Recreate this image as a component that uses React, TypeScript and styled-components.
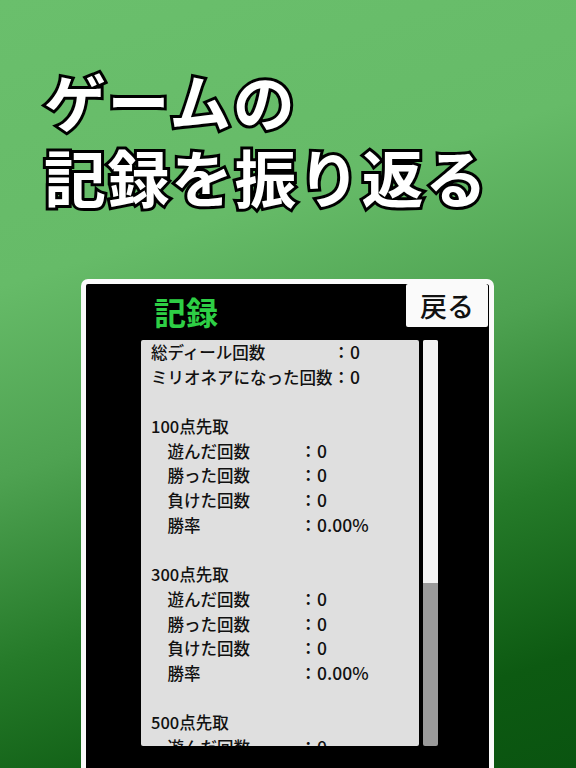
import styled, { createGlobalStyle } from "styled-components";

const GlobalStyle = createGlobalStyle`
  html, body {
    margin: 0;
    padding: 0;
  }
  body {
    width: 576px;
    height: 768px;
    overflow: hidden;
    font-family: "Noto Sans CJK JP", "Noto Sans", sans-serif;
  }
`;

const Page = styled.div`
  width: 576px;
  height: 768px;
  overflow: hidden;
  display: flex;
  flex-direction: column;
  background: linear-gradient(
    162deg,
    #6abf6c 0%,
    #66bb68 30%,
    #4ea251 50%,
    #257a29 70%,
    #0d5a12 88%,
    #0a5410 100%
  );
`;

const Headline = styled.h1`
  margin: 62px 0 0 44px;
  font-size: 62px;
  line-height: 76px;
  font-weight: 700;
  color: #fff;
  -webkit-text-stroke: 6px #000;
  paint-order: stroke fill;
  letter-spacing: 1.5px;
`;

const Frame = styled.div`
  margin: 65px 0 0 81px;
  width: 403px;
  flex: 1;
  background: #000;
  border: 5px solid #fafafa;
  border-bottom: none;
  border-radius: 7px 7px 0 0;
  display: flex;
  flex-direction: column;
`;

const Header = styled.div`
  height: 56px;
  display: flex;
  align-items: flex-start;
  justify-content: space-between;
`;

const Title = styled.div`
  margin: 9px 0 0 68px;
  font-size: 32px;
  line-height: 36px;
  font-weight: 700;
  color: #2ecf45;
`;

const BackButton = styled.button`
  margin: 0 1px 0 0;
  width: 82px;
  height: 43px;
  border: none;
  border-radius: 2px;
  background: #fafafa;
  color: #111;
  font-family: inherit;
  font-size: 27px;
  font-weight: 500;
  line-height: 1;
  padding: 0;
  cursor: pointer;
`;

const Body = styled.div`
  display: flex;
  gap: 4px;
  margin-left: 55px;
  height: 406px;
`;

const Panel = styled.div`
  width: 278px;
  height: 100%;
  overflow: hidden;
  background: #dfdfdf;
  border-radius: 2px;
  padding-left: 10px;
  box-sizing: border-box;
  color: #111;
  font-size: 16.5px;
  font-weight: 500;
  line-height: 24.7px;
`;

const Track = styled.div`
  width: 15px;
  height: 100%;
  border-radius: 2px;
  overflow: hidden;
  display: flex;
  flex-direction: column;
  background: #9a9a9a;
`;

const Thumb = styled.div<{ $size: number }>`
  height: ${(p) => p.$size}px;
  background: #f4f4f4;
`;

const Row = styled.div<{ $indent?: boolean }>`
  display: flex;
  white-space: pre;
  height: 24.7px;
  padding-left: ${(p) => (p.$indent ? "1em" : "0")};
`;

const Label = styled.span<{ $cols: number }>`
  width: ${(p) => p.$cols}em;
  flex-shrink: 0;
`;

const Value = styled.span`
  font-size: 17.5px;
`;

const Heading = styled.div`
  height: 24.7px;
`;

const Blank = styled.div`
  height: 24.7px;
`;

type Stat = { label: string; value: string };

const sections: { title: string; stats: Stat[] }[] = [100, 300, 500].map((pt) => ({
  title: `${pt}点先取`,
  stats: [
    { label: "遊んだ回数", value: "0" },
    { label: "勝った回数", value: "0" },
    { label: "負けた回数", value: "0" },
    { label: "勝率", value: "0.00%" },
  ],
}));

export default function App() {
  return (
    <Page>
      <GlobalStyle />
      <Headline>
        ゲームの
        <br />
        記録を振り返る
      </Headline>
      <Frame>
        <Header>
          <Title>記録</Title>
          <BackButton>戻る</BackButton>
        </Header>
        <Body>
          <Panel>
            <Row>
              <Label $cols={11}>総ディール回数</Label>
              <Value>：0</Value>
            </Row>
            <Row>
              <Label $cols={11}>ミリオネアになった回数</Label>
              <Value>：0</Value>
            </Row>
            {sections.map((s) => (
              <div key={s.title}>
                <Blank />
                <Heading>{s.title}</Heading>
                {s.stats.map((st) => (
                  <Row $indent key={st.label}>
                    <Label $cols={8}>{st.label}</Label>
                    <Value>：{st.value}</Value>
                  </Row>
                ))}
              </div>
            ))}
          </Panel>
          <Track>
            <Thumb $size={243} />
          </Track>
        </Body>
      </Frame>
    </Page>
  );
}
